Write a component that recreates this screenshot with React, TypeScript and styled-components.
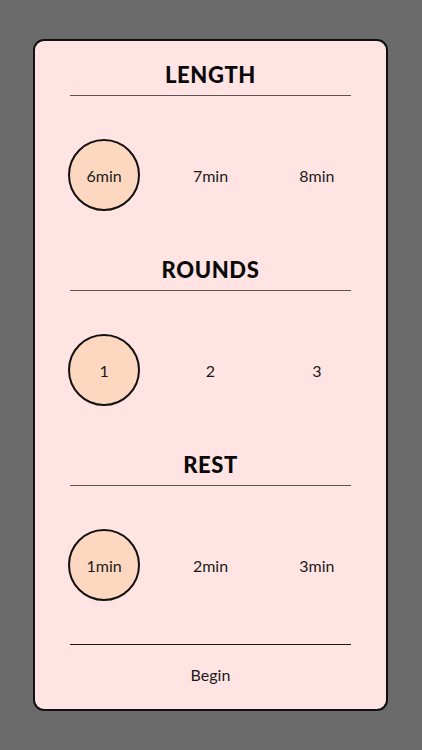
import { useState } from "react";
import styled, { createGlobalStyle } from "styled-components";

const GlobalStyle = createGlobalStyle`
  html, body {
    margin: 0;
    padding: 0;
    background: #6b6b6b;
  }
  #root {
    height: 750px;
  }
`;

const Page = styled.div`
  height: 750px;
  box-sizing: border-box;
  padding: 39px 34px 39px 33px;
  font-family: Lato, "Noto Sans", sans-serif;
`;

const Card = styled.div`
  height: 100%;
  box-sizing: border-box;
  background: #ffe4e3;
  border: 2px solid #111;
  border-radius: 11px;
  padding: 19px 16px 0;
  display: flex;
  flex-direction: column;
`;

const Section = styled.div`
  display: flex;
  flex-direction: column;
  & + & {
    margin-top: 44px;
  }
`;

const Title = styled.div`
  height: 30px;
  line-height: 30px;
  text-align: center;
  font-weight: 900;
  font-size: 22px;
  letter-spacing: 0.6px;
  color: #0a0a0a;
`;

const Divider = styled.div<{ $dark?: boolean }>`
  height: 1px;
  margin: 0 19px;
  background: ${(p) => (p.$dark ? "#1a1a1a" : "#5a5555")};
`;

const TitleDivider = styled(Divider)`
  margin-top: 5px;
`;

const OptionRow = styled.div`
  margin-top: 43px;
  display: grid;
  grid-template-columns: repeat(3, 1fr);
`;

const Option = styled.button<{ $active: boolean }>`
  justify-self: center;
  width: 72px;
  height: 72px;
  box-sizing: border-box;
  padding: 0;
  border-radius: 50%;
  border: 2px solid ${(p) => (p.$active ? "#111" : "transparent")};
  background: ${(p) => (p.$active ? "#fdd7c0" : "transparent")};
  font-family: inherit;
  font-size: 16px;
  color: #1a1a1a;
  cursor: pointer;
`;

const Footer = styled.div`
  margin-top: 43px;
  display: flex;
  flex-direction: column;
`;

const BeginButton = styled.button`
  margin-top: 20px;
  height: 20px;
  line-height: 20px;
  padding: 0;
  border: none;
  background: none;
  font-family: inherit;
  font-size: 16px;
  color: #1a1a1a;
  cursor: pointer;
`;

const sections = [
  { key: "length", title: "LENGTH", options: ["6min", "7min", "8min"] },
  { key: "rounds", title: "ROUNDS", options: ["1", "2", "3"] },
  { key: "rest", title: "REST", options: ["1min", "2min", "3min"] },
];

function App() {
  const [picked, setPicked] = useState<Record<string, number>>({
    length: 0,
    rounds: 0,
    rest: 0,
  });

  return (
    <Page>
      <GlobalStyle />
      <Card>
        {sections.map((s) => (
          <Section key={s.key}>
            <Title>{s.title}</Title>
            <TitleDivider />
            <OptionRow>
              {s.options.map((o, i) => (
                <Option
                  key={o}
                  $active={picked[s.key] === i}
                  onClick={() => setPicked({ ...picked, [s.key]: i })}
                >
                  {o}
                </Option>
              ))}
            </OptionRow>
          </Section>
        ))}
        <Footer>
          <Divider $dark />
          <BeginButton>Begin</BeginButton>
        </Footer>
      </Card>
    </Page>
  );
}

export default App;
